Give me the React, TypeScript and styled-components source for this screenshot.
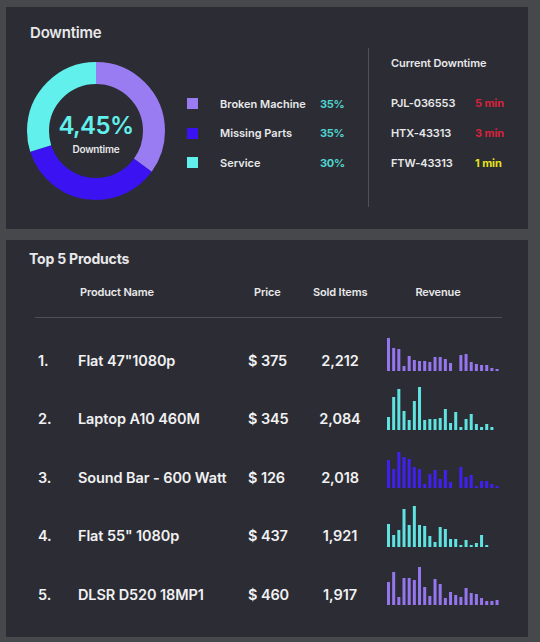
import { Fragment } from "react";
import styled, { createGlobalStyle } from "styled-components";

const GlobalStyle = createGlobalStyle`
  body {
    margin: 0;
    background: #47484c;
    font-family: Inter, "Open Sans", sans-serif;
    color: #e8e8ea;
  }
`;

const colors = {
  lilac: "#9a7cf2",
  violet: "#3b12f2",
  cyan: "#62f0ec",
  teal: "#4fd3d0",
  red: "#d7223c",
  yellow: "#e6e21c",
};

const Page = styled.div`
  padding: 7px 12px 5px 6px;
  display: flex;
  flex-direction: column;
  gap: 11px;
`;

const Panel = styled.section`
  background: #2c2d34;
  box-sizing: border-box;
`;

// ---- Downtime panel ----
const TopPanel = styled(Panel)`
  height: 222px;
  display: flex;
  padding: 17px 0 0 20px;
`;

const LeftCol = styled.div`
  display: flex;
  flex-direction: column;
  width: 140px;
`;

const Title = styled.h2`
  margin: 0;
  font-size: 15px;
  line-height: 18px;
  font-weight: 600;
  letter-spacing: -0.2px;
  padding-left: 4px;
`;

const DonutWrap = styled.div`
  position: relative;
  width: 140px;
  height: 140px;
  margin-top: 19px;
`;

const DonutCenter = styled.div`
  position: absolute;
  inset: 0;
  display: flex;
  flex-direction: column;
  align-items: center;
  justify-content: center;
  padding-top: 4px;
`;

const BigValue = styled.span`
  font-size: 24px;
  font-weight: 600;
  letter-spacing: -0.6px;
  color: ${colors.cyan};
  line-height: 28px;
`;

const SmallLabel = styled.span`
  font-size: 10px;
  font-weight: 600;
  letter-spacing: -0.2px;
  margin-top: 3px;
`;

const Legend = styled.div`
  margin: 65px 0 0 21px;
  display: grid;
  grid-template-columns: 11px 78px 24px;
  grid-auto-rows: 29.5px;
  column-gap: 22px;
  align-items: center;
  align-self: flex-start;
  font-size: 11px;
  font-weight: 600;
  letter-spacing: 0;
  white-space: nowrap;
`;

const Swatch = styled.span<{ $color: string }>`
  width: 11px;
  height: 11px;
  background: ${(p) => p.$color};
`;

const Pct = styled.span`
  color: ${colors.teal};
  font-weight: 700;
  letter-spacing: -0.3px;
`;

const VDivider = styled.div`
  width: 1px;
  height: 159px;
  background: #4f5157;
  margin: 24px 0 0 24px;
`;

const Current = styled.div`
  margin: 32px 0 0 22px;
  font-size: 11px;
  font-weight: 600;
  letter-spacing: -0.1px;
`;

const CurrentHead = styled.div`
  line-height: 14px;
`;

const CurrentList = styled.div`
  margin-top: 18px;
  display: grid;
  grid-template-columns: 84px auto;
  grid-auto-rows: 30px;
  align-items: center;
`;

const Mins = styled.span<{ $color: string }>`
  color: ${(p) => p.$color};
  font-weight: 700;
`;

// ---- Products panel ----
const BottomPanel = styled(Panel)`
  height: 397px;
  padding: 10px 26px 0 23px;
`;

const SubTitle = styled.h2`
  margin: 0;
  font-size: 14px;
  line-height: 17px;
  font-weight: 700;
  letter-spacing: -0.2px;
`;

const cols = "40px 170px 65px 54px 1fr";

const HeadRow = styled.div`
  margin: 18px 0 0 6px;
  padding: 0 0 18px 3px;
  border-bottom: 1px solid #4e5056;
  display: grid;
  grid-template-columns: ${cols};
  font-size: 11px;
  line-height: 14px;
  font-weight: 600;
  letter-spacing: -0.15px;
`;

const HeadCell = styled.span<{ $align?: string; $pad?: string }>`
  text-align: ${(p) => p.$align || "left"};
  padding: ${(p) => p.$pad || "0"};
  white-space: nowrap;
`;

const Rows = styled.div`
  margin: 13px 0 0 6px;
  padding-left: 3px;
`;

const Row = styled.div`
  height: 58.5px;
  display: grid;
  grid-template-columns: ${cols};
  grid-template-rows: 58.5px;
  align-items: center;
  font-size: 14.5px;
  font-weight: 600;
  letter-spacing: -0.1px;
  color: #f1f1f3;
`;

const Cell = styled.span<{ $align?: string }>`
  text-align: ${(p) => p.$align || "left"};
  white-space: nowrap;
`;

const Chart = styled.svg`
  display: block;
  margin: -24px 0 0 20px;
`;

function BarChart({ data, color }: { data: number[]; color: string }) {
  return (
    <Chart width="115" height="46" viewBox="0 0 115 46">
      {data.map((h, i) =>
        h > 0 ? (
          <rect key={i} x={i * 5.17} y={46 - h} width="3" height={h} fill={color} />
        ) : null
      )}
    </Chart>
  );
}

function Donut() {
  const r = 58;
  const c = 2 * Math.PI * r;
  const parts = [
    { v: 0.35, color: colors.lilac },
    { v: 0.35, color: colors.violet },
    { v: 0.3, color: colors.cyan },
  ];
  let acc = 0;
  return (
    <DonutWrap>
      <svg width="140" height="140" viewBox="0 0 140 140">
        <g transform="rotate(-90 70 70)">
          {parts.map((p, i) => {
            const el = (
              <circle
                key={i}
                cx="70"
                cy="70"
                r={r}
                fill="none"
                stroke={p.color}
                strokeWidth="22"
                strokeDasharray={`${p.v * c} ${c}`}
                strokeDashoffset={-acc * c}
              />
            );
            acc += p.v;
            return el;
          })}
        </g>
      </svg>
      <DonutCenter>
        <BigValue>4,45%</BigValue>
        <SmallLabel>Downtime</SmallLabel>
      </DonutCenter>
    </DonutWrap>
  );
}

const legend = [
  { label: "Broken Machine", pct: "35%", color: colors.lilac },
  { label: "Missing Parts", pct: "35%", color: colors.violet },
  { label: "Service", pct: "30%", color: colors.cyan },
];

const downtime = [
  { id: "PJL-036553", min: "5 min", color: colors.red },
  { id: "HTX-43313", min: "3 min", color: colors.red },
  { id: "FTW-43313", min: "1 min", color: colors.yellow },
];

const products = [
  {
    name: "Flat 47\"1080p",
    price: "$ 375",
    sold: "2,212",
    color: "#9676ee",
    bars: [33, 23, 22, 5, 15, 11, 10, 10, 9, 14, 14, 12, 8, 0, 16, 17, 9, 7, 6, 6, 3, 2],
  },
  {
    name: "Laptop A10 460M",
    price: "$ 345",
    sold: "2,084",
    color: "#5ee3e0",
    bars: [13, 33, 41, 19, 10, 29, 43, 10, 11, 11, 12, 21, 7, 18, 3, 11, 16, 6, 3, 6, 3],
  },
  {
    name: "Sound Bar - 600 Watt",
    price: "$ 126",
    sold: "2,018",
    color: "#4020f0",
    bars: [28, 19, 36, 31, 29, 21, 19, 4, 14, 18, 9, 18, 6, 0, 21, 11, 13, 2, 7, 7, 4, 2],
  },
  {
    name: "Flat 55\" 1080p",
    price: "$ 437",
    sold: "1,921",
    color: "#5ee3e0",
    bars: [23, 12, 17, 38, 22, 41, 22, 21, 11, 5, 20, 18, 8, 8, 2, 7, 2, 4, 12, 2],
  },
  {
    name: "DLSR D520 18MP1",
    price: "$ 460",
    sold: "1,917",
    color: "#9676ee",
    bars: [23, 33, 8, 27, 27, 25, 38, 18, 9, 26, 21, 7, 13, 10, 8, 17, 12, 11, 7, 4, 4, 5],
  },
];

export default function App() {
  return (
    <>
      <GlobalStyle />
      <Page>
        <TopPanel>
          <LeftCol>
            <Title>Downtime</Title>
            <Donut />
          </LeftCol>
          <Legend>
            {legend.map((l) => (
              <Fragment key={l.label}>
                <Swatch $color={l.color} />
                <span>{l.label}</span>
                <Pct>{l.pct}</Pct>
              </Fragment>
            ))}
          </Legend>
          <VDivider />
          <Current>
            <CurrentHead>Current Downtime</CurrentHead>
            <CurrentList>
              {downtime.map((d) => (
                <Fragment key={d.id}>
                  <span>{d.id}</span>
                  <Mins $color={d.color}>{d.min}</Mins>
                </Fragment>
              ))}
            </CurrentList>
          </Current>
        </TopPanel>

        <BottomPanel>
          <SubTitle>Top 5 Products</SubTitle>
          <HeadRow>
            <span />
            <HeadCell $pad="0 0 0 2px">Product Name</HeadCell>
            <HeadCell $pad="0 0 0 6px">Price</HeadCell>
            <HeadCell $align="center">Sold Items</HeadCell>
            <HeadCell $align="center" $pad="0 13px 0 20px">
              Revenue
            </HeadCell>
          </HeadRow>
          <Rows>
            {products.map((p, i) => (
              <Row key={p.name}>
                <Cell>{i + 1}.</Cell>
                <Cell>{p.name}</Cell>
                <Cell>{p.price}</Cell>
                <Cell $align="center">{p.sold}</Cell>
                <BarChart data={p.bars} color={p.color} />
              </Row>
            ))}
          </Rows>
        </BottomPanel>
      </Page>
    </>
  );
}
